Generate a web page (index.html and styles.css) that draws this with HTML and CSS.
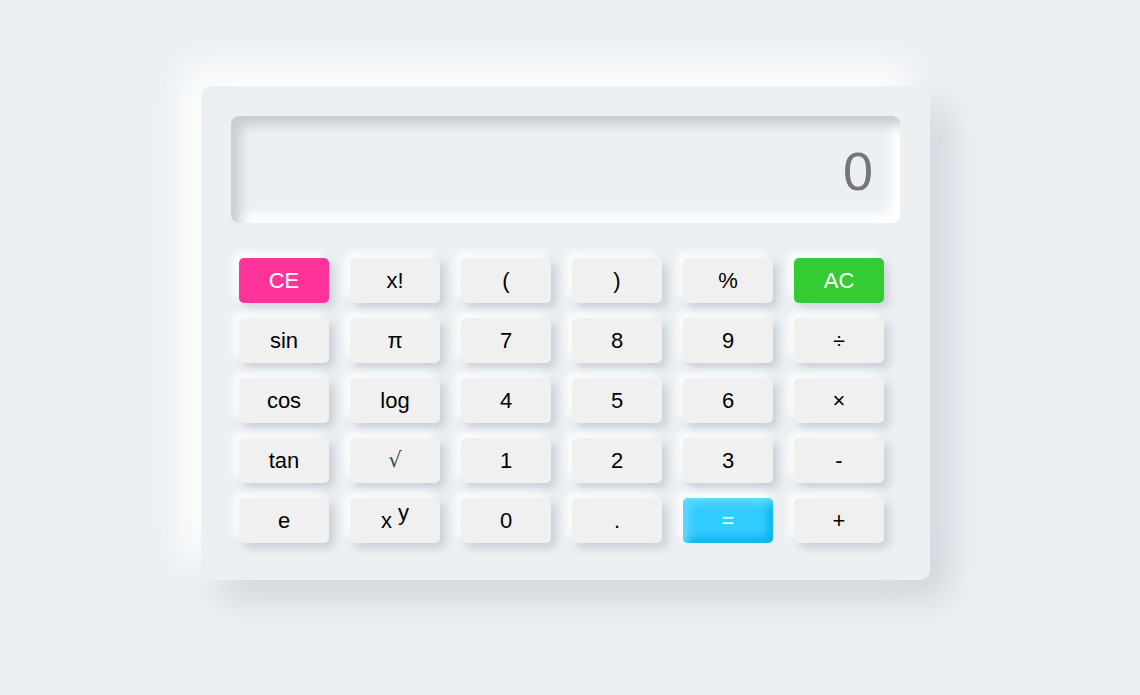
FILE: index.html
```html
<!DOCTYPE html>
<html lang="en">
<head>
<meta charset="utf-8">
<title>Calculator</title>
<link rel="stylesheet" href="styles.css">
</head>
<body>
<div class="calc">
  <div class="display">0</div>
  <div class="keys">
    <button class="key ce">CE</button>
    <button class="key">x!</button>
    <button class="key">(</button>
    <button class="key">)</button>
    <button class="key">%</button>
    <button class="key ac">AC</button>

    <button class="key">sin</button>
    <button class="key">π</button>
    <button class="key">7</button>
    <button class="key">8</button>
    <button class="key">9</button>
    <button class="key">÷</button>

    <button class="key">cos</button>
    <button class="key">log</button>
    <button class="key">4</button>
    <button class="key">5</button>
    <button class="key">6</button>
    <button class="key">×</button>

    <button class="key">tan</button>
    <button class="key sqrt">√</button>
    <button class="key">1</button>
    <button class="key">2</button>
    <button class="key">3</button>
    <button class="key">-</button>

    <button class="key">e</button>
    <button class="key">x <sup>y</sup></button>
    <button class="key">0</button>
    <button class="key">.</button>
    <button class="key eq">=</button>
    <button class="key">+</button>
  </div>
</div>
</body>
</html>
```
FILE: styles.css
```css
html, body {
  margin: 0;
  padding: 0;
}
body {
  background: #ecf0f3;
  font-family: "Liberation Sans", Arial, sans-serif;
  height: 695px;
  overflow: hidden;
}
.calc {
  width: 669px;
  margin: 86px 0 0 201px;
  padding: 30px 30px 37px 30px;
  background: #ecf0f3;
  border-radius: 10px;
  box-shadow: -18px -18px 36px #ffffff, 18px 18px 36px #cdd3da;
}
.display {
  height: 107px;
  border-radius: 8px;
  background: #ecf0f3;
  box-shadow: inset 9px 9px 12px #c9ccd0, inset -9px -9px 12px #ffffff;
  color: #767676;
  font-size: 54px;
  line-height: 110px;
  text-align: right;
  padding-right: 27px;
  box-sizing: border-box;
}
.keys {
  margin-top: 35px;
  padding-left: 8px;
  display: grid;
  grid-template-columns: repeat(6, 90px);
  grid-auto-rows: 45px;
  column-gap: 21px;
  row-gap: 15px;
}
.key {
  border: none;
  border-radius: 5px;
  background: #f0f0f0;
  color: #000;
  font-family: "Liberation Sans", Arial, sans-serif;
  font-size: 22px;
  padding: 0;
  line-height: 45px;
  box-shadow: 5px 5px 10px rgba(170, 178, 190, 0.55), -5px -5px 10px #ffffff;
}
.key sup {
  font-size: 22px;
  position: relative;
  top: 4px;
  vertical-align: top;
  line-height: 22px;
}
.sqrt {
  font-family: "DejaVu Serif", "Liberation Serif", serif;
  font-size: 21px;
  color: #3b4a5a;
}
.ce {
  background: #ff3399;
  color: #fff;
  box-shadow: 5px 5px 10px rgba(170, 178, 190, 0.45), -5px -5px 10px #ffffff;
}
.ac {
  background: #33cc33;
  color: #fff;
  box-shadow: 5px 5px 10px rgba(170, 178, 190, 0.45), -5px -5px 10px #ffffff;
}
.eq {
  background: #33ccff;
  color: #fff;
  box-shadow: inset 5px 5px 8px #66daff, inset -5px -5px 8px #00b2ec, -5px -5px 10px #ffffff;
}
```
